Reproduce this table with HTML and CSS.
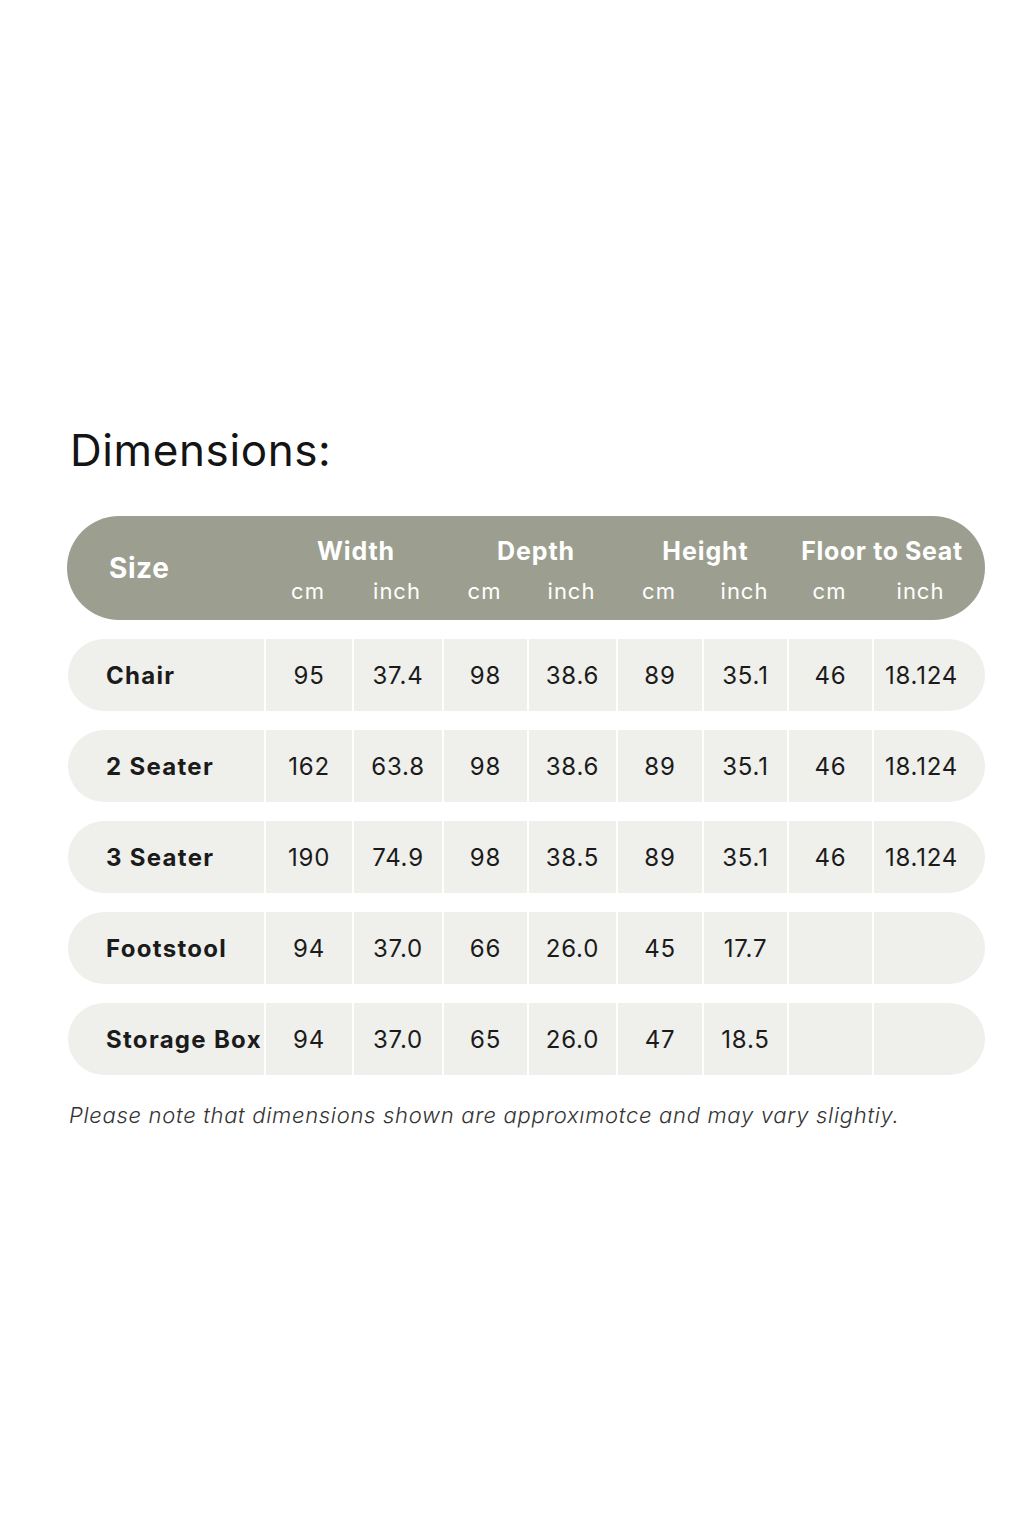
FILE: index.html
```html
<!DOCTYPE html>
<html lang="en">
<head>
<meta charset="utf-8">
<title>Dimensions</title>
<link rel="stylesheet" href="styles.css">
</head>
<body>
<main class="page">
  <h1 class="title">Dimensions:</h1>
  <div class="table">
    <div class="head">
      <div class="head-size">Size</div>
      <div class="group g1">Width</div>
      <div class="group g2">Depth</div>
      <div class="group g3">Height</div>
      <div class="group g4">Floor to Seat</div>
      <div class="unit">cm</div><div class="unit">inch</div>
      <div class="unit">cm</div><div class="unit">inch</div>
      <div class="unit">cm</div><div class="unit">inch</div>
      <div class="unit">cm</div><div class="unit unit-last">inch</div>
    </div>
    <div class="row">
      <div class="cell label">Chair</div>
      <div class="cell">95</div><div class="cell">37.4</div>
      <div class="cell">98</div><div class="cell">38.6</div>
      <div class="cell">89</div><div class="cell">35.1</div>
      <div class="cell">46</div><div class="cell last">18.124</div>
    </div>
    <div class="row">
      <div class="cell label">2 Seater</div>
      <div class="cell">162</div><div class="cell">63.8</div>
      <div class="cell">98</div><div class="cell">38.6</div>
      <div class="cell">89</div><div class="cell">35.1</div>
      <div class="cell">46</div><div class="cell last">18.124</div>
    </div>
    <div class="row">
      <div class="cell label">3 Seater</div>
      <div class="cell">190</div><div class="cell">74.9</div>
      <div class="cell">98</div><div class="cell">38.5</div>
      <div class="cell">89</div><div class="cell">35.1</div>
      <div class="cell">46</div><div class="cell last">18.124</div>
    </div>
    <div class="row">
      <div class="cell label">Footstool</div>
      <div class="cell">94</div><div class="cell">37.0</div>
      <div class="cell">66</div><div class="cell">26.0</div>
      <div class="cell">45</div><div class="cell">17.7</div>
      <div class="cell"></div><div class="cell last"></div>
    </div>
    <div class="row">
      <div class="cell label">Storage Box</div>
      <div class="cell">94</div><div class="cell">37.0</div>
      <div class="cell">65</div><div class="cell">26.0</div>
      <div class="cell">47</div><div class="cell">18.5</div>
      <div class="cell"></div><div class="cell last"></div>
    </div>
  </div>
  <p class="note">Please note that dimensions shown are approxımotce and may vary slightiy.</p>
</main>
</body>
</html>
```
FILE: styles.css
```css
* { box-sizing: border-box; }
html, body { margin: 0; padding: 0; background: #ffffff; }
body {
  font-family: "Inter", "Noto Sans", sans-serif;
  color: #1b1b1b;
}
.page {
  padding: 422px 39px 0 68px;
}
.title {
  margin: 0 0 0 2px;
  font-size: 44px;
  line-height: 56px;
  font-weight: 400;
  letter-spacing: 0.6px;
  color: #141414;
}
.table {
  margin-top: 38px;
  display: flex;
  flex-direction: column;
  gap: 19px;
}
.head {
  height: 104px;
  margin-left: -1px;
  background: #9c9f90;
  border-radius: 52px;
  display: grid;
  grid-template-columns: 197px 88px 90px 85px 89px 86px 85px 85px 113px;
  grid-template-rows: 54px 40px;
  padding-top: 8px;
  color: #ffffff;
}
.head-size {
  grid-row: 1 / 3;
  align-self: center;
  padding-left: 42px;
  padding-bottom: 6px;
  font-size: 28px;
  font-weight: 700;
  letter-spacing: 0.6px;
}
.group {
  grid-column: span 2;
  text-align: center;
  align-self: center;
  font-size: 25px;
  font-weight: 700;
  letter-spacing: 0.9px;
}
.g1 { padding-left: 6px; }
.g2 { padding-left: 14px; }
.g3 { padding-left: 8px; }
.g4 { padding-right: 8px; letter-spacing: 0.6px; }
.unit {
  text-align: center;
  font-size: 22px;
  font-weight: 400;
  align-self: start;
  letter-spacing: 1px;
}
.unit-last { padding-right: 16px; }
.row {
  height: 72px;
  display: grid;
  grid-template-columns: 196px 86px 88px 83px 87px 84px 83px 83px 111px;
  column-gap: 2px;
}
.cell {
  background: #efefec;
  display: flex;
  align-items: center;
  justify-content: center;
  font-size: 24px;
  font-weight: 400;
  letter-spacing: 0.8px;
}
.cell.label {
  justify-content: flex-start;
  padding-left: 38px;
  font-weight: 700;
  letter-spacing: 1.3px;
  border-radius: 36px 0 0 36px;
  white-space: nowrap;
}
.cell.last {
  border-radius: 0 36px 36px 0;
  padding-right: 16px;
}
.note {
  margin: 27px 0 0 1px;
  font-size: 22px;
  font-style: italic;
  font-weight: 300;
  color: #333333;
  letter-spacing: 0.7px;
}
```
